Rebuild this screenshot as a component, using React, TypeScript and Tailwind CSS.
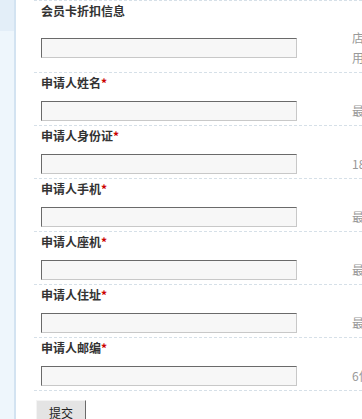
// 申请表单片段：左侧浅蓝边栏 + 带虚线分隔的字段行。
const fields: { label: string; required: boolean; hint: string[] }[] = [
  { label: "会员卡折扣信息", required: false, hint: ["店铺会员卡折扣说明", "用于会员结算时参考"] },
  { label: "申请人姓名", required: true, hint: ["最多20个字"] },
  { label: "申请人身份证", required: true, hint: ["18位身份证号码"] },
  { label: "申请人手机", required: true, hint: ["最多11位数字"] },
  { label: "申请人座机", required: true, hint: ["最多20个字符"] },
  { label: "申请人住址", required: true, hint: ["最多50个字"] },
  { label: "申请人邮编", required: true, hint: ["6位数字邮政编码"] },
];

function FieldRow({ label, required, hint, first }: { label: string; required: boolean; hint: string[]; first: boolean }) {
  return (
    <div
      className={
        "border-b border-dashed border-[#d6e0e8] pl-[7px] " + (first ? "border-t" : "")
      }
    >
      <div className="h-[19px] whitespace-nowrap text-[12px] leading-[19px] font-bold text-[#333]">
        {label}
        {required && <span className="text-[#cc0000]">*</span>}
      </div>
      <div className={"flex items-center pb-[4px] " + (first ? "pt-[8px]" : "pt-[9px]")}>
        <div className="w-[311px] shrink-0">
          <input
            type="text"
            className="block h-[20px] w-[256px] border border-t-[#6a6a6a] border-l-[#6a6a6a] border-b-[#c8c8c8] border-r-[#c8c8c8] bg-[#f7f7f7] outline-none"
          />
        </div>
        <div className="whitespace-nowrap text-[12px] leading-[20px] text-[#999]">
          {hint.map((h) => (
            <div key={h}>{h}</div>
          ))}
        </div>
      </div>
    </div>
  );
}

export default function App() {
  return (
    <div
      className="flex h-[419px] w-[362px] overflow-hidden bg-white"
      style={{ fontFamily: '"Noto Sans CJK SC", "Liberation Sans", sans-serif' }}
    >
      <aside className="flex w-[16px] shrink-0 flex-col border-r-2 border-[#d3e3f1]">
        <div className="h-[31px] bg-[#e3eef8]" />
        <div className="flex-1 bg-[#eef6fc]" />
      </aside>

      <main className="ml-[18px] min-w-0 flex-1">
        {fields.map((f, i) => (
          <FieldRow key={f.label} {...f} first={i === 0} />
        ))}

        <div className="pt-[8px] pl-[2px]">
          <button
            type="submit"
            className="h-[28px] w-[50px] border border-t-[#f4f4f4] border-l-[#f4f4f4] border-b-[#6a6a6a] border-r-[#6a6a6a] bg-[#e4e4e4] pb-[2px] text-[12px] text-[#222]"
          >
            提交
          </button>
        </div>
      </main>
    </div>
  );
}
